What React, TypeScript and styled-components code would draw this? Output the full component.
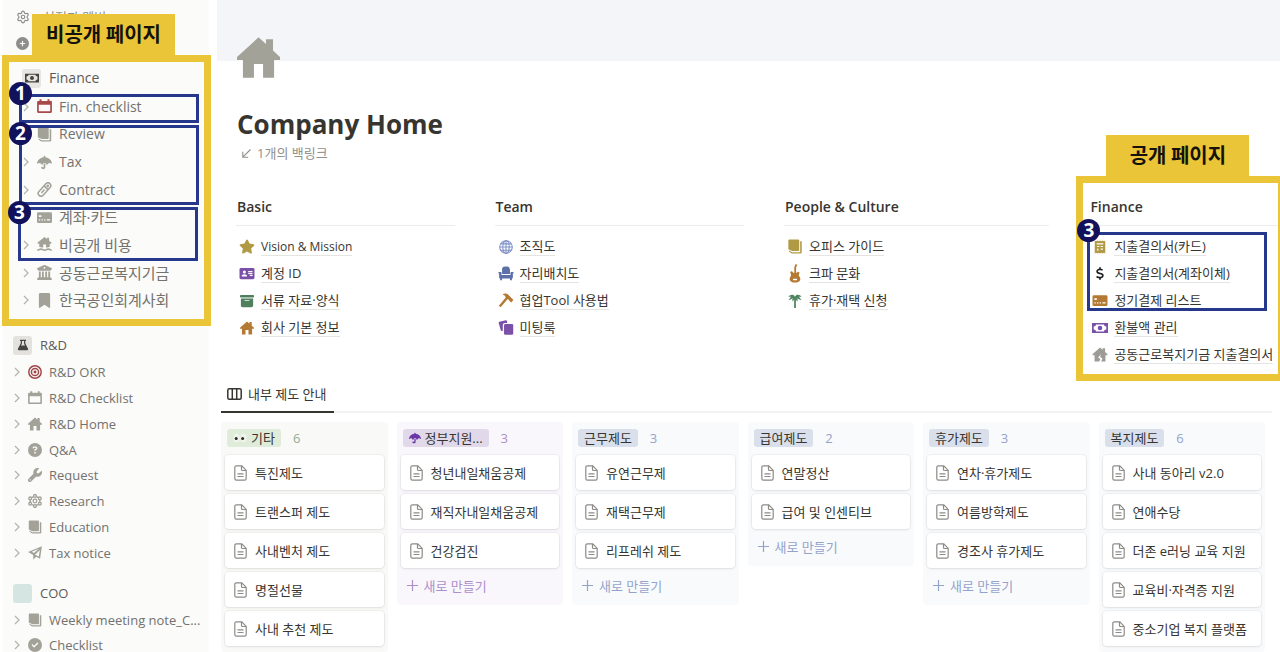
import React from "react";
import styled, { createGlobalStyle } from "styled-components";
import {
  FaBookmark,
  FaBoxArchive,
  FaBuildingColumns,
  FaCircleCheck,
  FaCirclePlus,
  FaCircleQuestion,
  FaDollarSign,
  FaStar,
  FaUmbrella,
  FaWrench,
} from "react-icons/fa6";
import { Settings } from "lucide-react";

const colors = {
  ink: "#373530",
  sidebarText: "#73726e",
  iconGray: "#a3a299",
  yellow: "#ebc538",
  navy: "#12125c",
  frameBlue: "#26388c",
  line: "#ececea",
};

const GlobalStyle = createGlobalStyle`
  *, *::before, *::after { box-sizing: border-box; }
  body {
    margin: 0;
    background: #ffffff;
    color: ${colors.ink};
    font-family: "Open Sans", "Noto Sans CJK KR", sans-serif;
    font-size: 13px;
    line-height: 18px;
  }
  a { color: inherit; text-decoration: none; }
  button { font: inherit; color: inherit; background: none; border: 0; padding: 0; cursor: pointer; }
  ul { list-style: none; margin: 0; padding: 0; }
  h1, h2 { margin: 0; }
  svg { display: block; flex: none; }
`;

/* ---------- icons ---------- */

type IconProps = { size?: number };
const Svg = ({ size = 16, children }: IconProps & { children: React.ReactNode }) => (
  <svg width={size} height={size} viewBox="0 0 16 16" fill="currentColor" aria-hidden="true">
    {children}
  </svg>
);

const HomeIcon = ({ size }: IconProps) => (
  <Svg size={size}>
    <path d="M8 .5 10.8 3V1.200h2.600v4.200L16 7.800v1.100h-2.200v6.600H9.700v-5.100H6.300v5.100H2.200V8.900H0V7.800Z" />
  </Svg>
);
const CrackedHomeIcon = ({ size }: IconProps) => (
  <Svg size={size}>
    <path d="M8 .5 10.8 3V1.200h2.600v4.200L16 7.800v1.100h-2.200v6.600H9.200l1.400-3.300-2.500-1.500.9-3-3 3.500 2.400 1.600-1.200 2.700H2.200V8.900H0V7.800Z" />
  </Svg>
);
const MoneyIcon = ({ size }: IconProps) => (
  <Svg size={size}>
    <path
      fillRule="evenodd"
      d="M0 3h16v10H0ZM4 4.400C4 5.600 3 6.400 1.700 6.400v3.200C3 9.600 4 10.400 4 11.600h8c0-1.200 1-2 2.300-2V6.400C13 6.400 12 5.600 12 4.400Z"
    />
    <circle cx="8" cy="8" r="2.300" />
  </Svg>
);
const CalendarIcon = ({ size }: IconProps) => (
  <Svg size={size}>
    <path
      fillRule="evenodd"
      d="M2.700.3h2.100V2h6.400V.3h2.100V2h1.200A1.200 1.200 0 0 1 15.900 3.200v10.500a1.200 1.200 0 0 1-1.200 1.200H1.300A1.200 1.200 0 0 1 .1 13.700V3.200A1.200 1.200 0 0 1 1.300 2h1.400ZM1.900 6v7.100h12.200V6Z"
    />
  </Svg>
);
const BooksIcon = ({ size }: IconProps) => (
  <Svg size={size}>
    <path d="M2.200.5h9.300a1 1 0 0 1 1 1v10.300a1 1 0 0 1-1 1H5.200L.9 10.900V1.700A1.200 1.200 0 0 1 2.200.5Z" />
    <path d="M13.500 2.500h1.700v11.700a1.300 1.300 0 0 1-1.300 1.300H4.500L1.700 13.200v-1.100l3.200 1.900h8.600Z" />
  </Svg>
);
const TubeIcon = ({ size }: IconProps) => (
  <Svg size={size}>
    <g transform="rotate(42 8 8)" fill="none" stroke="currentColor" strokeWidth="1.600">
      <rect x="5" y="-.5" width="6" height="17" rx="3" />
      <path d="M5 5.500h6" />
      <path d="M8 8v5" />
      <circle cx="8" cy="2.800" r=".7" />
    </g>
  </Svg>
);
const CardIcon = ({ size }: IconProps) => (
  <Svg size={size}>
    <path
      fillRule="evenodd"
      d="M1.500 2.300h13A1.500 1.500 0 0 1 16 3.800v8.600a1.500 1.500 0 0 1-1.500 1.500h-13A1.500 1.500 0 0 1 0 12.400V3.800a1.500 1.500 0 0 1 1.500-1.500ZM2 5.700v1.800h2.600v-1.800ZM2 9.800v1.300h1.400V9.800Zm2.800 0v1.300h1.400V9.800Zm2.800 0v1.300H9V9.800Zm3 0v1.300H14V9.800Z"
    />
  </Svg>
);
const FloodHouseIcon = ({ size }: IconProps) => (
  <Svg size={size}>
    <path d="M8 0l2.700 2.200V.9h2.200V4l2.700 2.200-.6 1H13.600v3.400c-1-.2-1.900.7-2.800.7-.4 0-.8-.2-1.200-.5V8H6.600v2.900c-.8.5-1.700.4-2.500 0l-1.700-.5V7.200H1L.4 6.200Z" />
    <path
      d="M.3 14.200c2 0 2-1.300 3.900-1.300s2 1.300 3.900 1.300 2-1.300 3.900-1.300 1.900 1.300 3.700 1.300"
      fill="none"
      stroke="currentColor"
      strokeWidth="1.700"
    />
  </Svg>
);
const FlaskIcon = ({ size }: IconProps) => (
  <Svg size={size}>
    <path
      fillRule="evenodd"
      d="M4 1h8v1.600h-1v3.200l3.700 7.200c.5 1-.1 2-1.200 2h-11c-1.100 0-1.700-1-1.200-2L5 5.800V2.600H4Zm2.600 1.600v3.600L5.300 8.800h5.400L9.400 6.200V2.600Z"
    />
  </Svg>
);
const TargetIcon = ({ size }: IconProps) => (
  <Svg size={size}>
    <g fill="none" stroke="currentColor" strokeWidth="1.700">
      <circle cx="8" cy="8" r="7.100" />
      <circle cx="8" cy="8" r="4.100" />
    </g>
    <circle cx="8" cy="8" r="1.700" />
  </Svg>
);
const MoleculeIcon = ({ size }: IconProps) => (
  <Svg size={size}>
    <g fill="none" stroke="currentColor" strokeWidth="1.500">
      <circle cx="8" cy="8" r="2.100" />
      <circle cx="8" cy="2.200" r="1.600" />
      <circle cx="8" cy="13.800" r="1.600" />
      <circle cx="2.500" cy="5" r="1.600" />
      <circle cx="2.500" cy="11" r="1.600" />
      <circle cx="13.500" cy="5" r="1.600" />
      <circle cx="13.500" cy="11" r="1.600" />
      <path d="M3.900 4.200l2.700-1.300M9.400 2.900l2.700 1.300M2.500 6.600v2.800M13.500 6.600v2.800M3.900 11.800l2.700 1.300M9.400 13.100l2.700-1.300" />
    </g>
  </Svg>
);
const PlaneIcon = ({ size }: IconProps) => (
  <Svg size={size}>
    <path
      fillRule="evenodd"
      d="M15.900.4 13.800 14.500l-4.600-2.200-3.200 3.500V10.200L0 6.800Zm-3.600 2.700L4.400 6.700l2.400 1.400Zm1.200 1.500L8.100 10l4.200 2Z"
    />
  </Svg>
);
const IdCardIcon = ({ size }: IconProps) => (
  <Svg size={size}>
    <path
      fillRule="evenodd"
      d="M1.500 2h13A1.500 1.500 0 0 1 16 3.500v9a1.500 1.500 0 0 1-1.500 1.500h-13A1.500 1.500 0 0 1 0 12.500v-9A1.500 1.500 0 0 1 1.500 2ZM5.200 4.700a1.600 1.600 0 1 0 0 3.200 1.600 1.600 0 0 0 0-3.200ZM2.300 11.300h5.800c0-1.600-1.100-2.400-2.900-2.400s-2.900.8-2.900 2.400ZM9.300 5.200v1.200h4.600V5.200Zm0 2.100v1.200h4.600V7.300Zm1.600 2.100v1.200h3V9.400Z"
    />
  </Svg>
);
const GlobeIcon = ({ size }: IconProps) => (
  <Svg size={size}>
    <g fill="none" stroke="currentColor" strokeWidth="1.200">
      <circle cx="8" cy="8" r="7.200" />
      <ellipse cx="8" cy="8" rx="3.700" ry="7.200" />
      <path d="M8 .8v14.400M.8 8h14.400M2 4.400h12M2 11.600h12" />
    </g>
  </Svg>
);
const ArmchairIcon = ({ size }: IconProps) => (
  <Svg size={size}>
    <path d="M3.800 3.900A3.300 3.300 0 0 1 7.100.6h1.800a3.300 3.300 0 0 1 3.300 3.300v4.700H3.800Z" />
    <path d="M0 6.300h2.600a.6.600 0 0 1 .6.600v2.700h9.600V6.900a.6.600 0 0 1 .6-.6H16v1.600h-.7v4.300a1 1 0 0 1-1 1v2h-2v-2H3.700v2h-2v-2a1 1 0 0 1-1-1V7.900H0Z" />
  </Svg>
);
const ClawHammerIcon = ({ size }: IconProps) => (
  <Svg size={size}>
    <path d="M4.300 1.700C6.300.2 8.700.1 10.500 1.800l2.600 2.700c.2.700.5 1 1.100 1.100l1.700 1.900-2.400 2.500-2-1.800c0-.8-.3-1.200-1-1.300L9.800 6.400 2.300 15.300.4 13.500 7.700 4.800C7.200 3 6 2.300 4.300 1.700Z" />
  </Svg>
);
const DeckIcon = ({ size }: IconProps) => (
  <Svg size={size}>
    <path d="M7.800.2 1 1.900a1 1 0 0 0-.8 1.200L2.400 11a1 1 0 0 0 1.200.7l1-.2V5.400a2.200 2.200 0 0 1 2.200-2.200h2.600L9 1A1 1 0 0 0 7.800.2Z" />
    <rect x="5.900" y="4.200" width="9.800" height="11.600" rx="1.400" />
  </Svg>
);
const GuitarIcon = () => (
  <svg width="12" height="19" viewBox="0 0 12 19" fill="currentColor" aria-hidden="true">
    <path
      fillRule="evenodd"
      d="M5.300 9V3.300L6.400.3 8.300.6 7.100 3.600V9c.9 0 1.300-.6 1.600-1.200 1.500-.3 2.100.8 1.500 1.900-.8 1.400-.3 2 .5 3.200 1.800 3-.3 5.600-4.700 5.600s-6.500-2.600-4.700-5.600c.8-1.200 1.100-2 .3-3.400-.7-1.300 0-2.600 1.500-2.300C3.800 8.100 4.400 9 5.300 9ZM4 14.800v1.400h4v-1.400Z"
    />
  </svg>
);
const PalmIcon = ({ size }: IconProps) => (
  <Svg size={size}>
    <path d="M8 3.100C9.500 0 13.500.3 15.600 3.200L12.500 3l3 3.800c-2.200-.1-3.900-.9-5-2.200.8 1.400.7 2.700.1 4L9 6.300V16H7V6.300L5.400 8.600c-.6-1.300-.7-2.600.1-4-1.100 1.300-2.800 2.100-5 2.200l3-3.800-3.100.2C2.500.3 6.500 0 8 3.100Z" />
  </Svg>
);
const ReceiptIcon = ({ size }: IconProps) => (
  <Svg size={size}>
    <path
      fillRule="evenodd"
      d="M2 .5l1.500.8L5 .5l1.500.8L8 .5l1.500.8L11 .5l1.500.8L14 .5v15l-1.500-.8-1.500.8-1.500-.8-1.500.8-1.500-.8-1.500.8-1.500-.8-1.500.8ZM4.200 3.800V5h7.600V3.800Zm.6 3v1.300h2.500V6.800Zm4 0v1.300h2.500V6.800Zm-4 3v2.500h1.300V9.800Zm4 0v1.300h2.500V9.800Z"
    />
  </Svg>
);
const ChevronIcon = () => (
  <svg width="8" height="10" viewBox="0 0 8 10" fill="none" stroke="#b5b4af" strokeWidth="1.300" aria-hidden="true">
    <path d="M2 1l4 4-4 4" />
  </svg>
);
const PageIcon = () => (
  <svg width="13" height="16" viewBox="0 0 13 16" fill="none" stroke="#8c8b87" strokeWidth="1.200" aria-hidden="true">
    <path d="M2.400.8h5.400l4.400 4.600v8.200a1.600 1.600 0 0 1-1.600 1.600H2.400A1.600 1.600 0 0 1 .8 13.600V2.400A1.600 1.600 0 0 1 2.400.8Z" />
    <path d="M7.500 1v3.500a1 1 0 0 0 1 1h3.500M3.500 8.800h6M3.500 11.500h6" />
  </svg>
);
const PlusIcon = () => (
  <svg width="11" height="11" viewBox="0 0 11 11" stroke="currentColor" strokeWidth="1.200" aria-hidden="true">
    <path d="M5.500 0v11M0 5.500h11" />
  </svg>
);
const BoardIcon = () => (
  <svg width="15" height="12" viewBox="0 0 15 12" fill="none" stroke="#373530" strokeWidth="1.500" aria-hidden="true">
    <rect x=".8" y=".8" width="13.400" height="10.400" rx="1.500" />
    <path d="M5.300 1v10M9.700 1v10" />
  </svg>
);
const BacklinkIcon = () => (
  <svg width="9" height="9" viewBox="0 0 9 9" fill="none" stroke="currentColor" strokeWidth="1.100" aria-hidden="true">
    <path d="M8.500.5.800 8.200M.8 2.800v5.400h5.400" />
  </svg>
);
const EyesIcon = () => (
  <svg width="14" height="12" viewBox="0 0 14 12" aria-hidden="true">
    <ellipse cx="3.500" cy="6" rx="3.200" ry="4.500" fill="#eef3eb" />
    <ellipse cx="10.500" cy="6" rx="3.200" ry="4.500" fill="#eef3eb" />
    <circle cx="3.200" cy="6.500" r="1.500" fill="#2b2b2b" />
    <circle cx="9.600" cy="6.500" r="1.500" fill="#2b2b2b" />
  </svg>
);

/* ---------- annotations drawn over the page ---------- */

type Box = { $top: number; $left: number; $right: number; $bottom: number };

const Frame = styled.div<Box>`
  position: absolute;
  top: ${(p) => p.$top}px;
  left: ${(p) => p.$left}px;
  right: ${(p) => p.$right}px;
  bottom: ${(p) => p.$bottom}px;
  border: 7px solid ${colors.yellow};
  pointer-events: none;
`;
const FrameLabel = styled.div`
  position: absolute;
  bottom: calc(100% + 7px);
  left: 23px;
  width: 143px;
  height: 41px;
  background: ${colors.yellow};
  color: #14120a;
  font: 700 20px/40px "Noto Sans CJK KR", sans-serif;
  text-align: center;
  white-space: nowrap;
`;
const Highlight = styled.div<{ $top: number; $left: number; $height: number }>`
  position: absolute;
  top: ${(p) => p.$top}px;
  left: ${(p) => p.$left}px;
  width: 180px;
  height: ${(p) => p.$height}px;
  border: 3px solid ${colors.frameBlue};
  pointer-events: none;
`;
const Badge = styled.span<{ $top: number }>`
  position: absolute;
  top: ${(p) => p.$top}px;
  left: -13px;
  width: 23px;
  height: 23px;
  border-radius: 50%;
  background: ${colors.navy};
  color: #ffffff;
  font: 700 19px/23px "Open Sans", sans-serif;
  text-align: center;
`;

/* ---------- shell ---------- */

const Shell = styled.div`
  display: flex;
  height: 100vh;
  overflow: hidden;
`;

/* ---------- sidebar ---------- */

const Sidebar = styled.nav`
  flex: none;
  width: 206px;
  margin: 0 8px 0 3px;
  background: #fbfbfa;
  color: ${colors.sidebarText};
`;
const Utility = styled.a`
  display: flex;
  align-items: center;
  gap: 13px;
  height: 26px;
  padding-left: 13px;
  color: #8e8d89;
`;
const UtilityList = styled.div`
  padding-top: 4px;
`;
const Section = styled.section<{ $indent: number; $top: number }>`
  position: relative;
  padding-top: ${(p) => p.$top}px;
  padding-left: ${(p) => p.$indent}px;
`;
const SectionTitle = styled.h2<{ $large?: boolean }>`
  display: flex;
  align-items: center;
  gap: 8px;
  height: 20px;
  font-size: ${(p) => (p.$large ? 14 : 13)}px;
  font-weight: 400;
  color: #5b5a56;
`;
const Tile = styled.span<{ $bg: string }>`
  display: grid;
  place-items: center;
  width: 19px;
  height: 19px;
  border-radius: 3px;
  background: ${(p) => p.$bg};
  color: #45443f;
`;
const Tree = styled.ul<{ $height: number; $top: number }>`
  display: flex;
  flex-direction: column;
  height: ${(p) => p.$height}px;
  margin-top: ${(p) => p.$top}px;
`;
const TreeItem = styled.li`
  display: flex;
  flex: 1;
`;
const TreeLink = styled.a<{ $color?: string; $size: number }>`
  display: flex;
  flex: 1;
  align-items: center;
  min-width: 0;
  font-size: ${(p) => p.$size}px;
  white-space: nowrap;
  > svg:nth-of-type(2) {
    margin: 0 7px;
    color: ${(p) => p.$color || colors.iconGray};
  }
`;

type Entry = { label: string; icon: React.ReactNode; color?: string; size?: number };

const financeTree: Entry[] = [
  { label: "Fin. checklist", icon: <CalendarIcon size={15} />, color: "#a84a48", size: 14 },
  { label: "Review", icon: <BooksIcon size={15} />, size: 14 },
  { label: "Tax", icon: <FaUmbrella size={15} />, size: 14 },
  { label: "Contract", icon: <TubeIcon size={15} />, size: 14 },
  { label: "계좌·카드", icon: <CardIcon size={15} />, size: 15 },
  { label: "비공개 비용", icon: <FloodHouseIcon size={15} />, size: 15 },
  { label: "공동근로복지기금", icon: <FaBuildingColumns size={15} />, size: 15 },
  { label: "한국공인회계사회", icon: <FaBookmark size={15} />, size: 15 },
];
const rdTree: Entry[] = [
  { label: "R&D OKR", icon: <TargetIcon size={14} />, color: "#a04848" },
  { label: "R&D Checklist", icon: <CalendarIcon size={14} /> },
  { label: "R&D Home", icon: <HomeIcon size={14} /> },
  { label: "Q&A", icon: <FaCircleQuestion size={14} /> },
  { label: "Request", icon: <FaWrench size={14} /> },
  { label: "Research", icon: <MoleculeIcon size={14} /> },
  { label: "Education", icon: <BooksIcon size={14} /> },
  { label: "Tax notice", icon: <PlaneIcon size={14} /> },
];
const cooTree: Entry[] = [
  { label: "Weekly meeting note_C...", icon: <BooksIcon size={14} /> },
  { label: "Checklist", icon: <FaCircleCheck size={14} /> },
];

const TreeList = ({ items, height, top = 4 }: { items: Entry[]; height: number; top?: number }) => (
  <Tree $height={height} $top={top}>
    {items.map((item) => (
      <TreeItem key={item.label}>
        <TreeLink href="#" $color={item.color} $size={item.size || 13}>
          <ChevronIcon />
          {item.icon}
          {item.label}
        </TreeLink>
      </TreeItem>
    ))}
  </Tree>
);

/* ---------- main ---------- */

const Main = styled.main`
  display: flex;
  flex: 1;
  flex-direction: column;
  min-width: 0;
  overflow: hidden;
`;
const Cover = styled.div`
  flex: none;
  height: 61px;
  background: #f3f5f9;
`;
const PageHeader = styled.header`
  padding-left: 20px;
`;
const PageIconWrap = styled.div`
  position: relative;
  width: 43px;
  height: 43px;
  margin-top: -25px;
  color: ${colors.iconGray};
`;
const Title = styled.h1`
  margin-top: 27px;
  font-size: 26px;
  line-height: 36px;
  font-weight: 700;
`;
const Backlink = styled.a`
  display: flex;
  align-items: center;
  gap: 6px;
  width: max-content;
  margin: 2px 0 0 5px;
  color: #91908c;
`;
const Directory = styled.div`
  display: grid;
  grid-template-columns: 219fr 250fr 266fr 191fr;
  gap: 40px;
  margin-top: 35px;
  padding-left: 19px;
`;
const DirectoryColumn = styled.section`
  position: relative;
  height: 171px;
`;
const DirectoryTitle = styled.h2`
  height: 29px;
  padding-left: 1px;
  border-bottom: 1px solid ${colors.line};
  font-size: 14px;
  line-height: 20px;
  font-weight: 600;
`;
const LinkList = styled.ul`
  display: grid;
  grid-auto-rows: 27px;
  margin-top: 7px;
  padding-left: 3px;
`;
const LinkRow = styled.li<{ $color: string }>`
  display: flex;
  align-items: center;
  > svg {
    width: 16px;
    margin-right: 6px;
    color: ${(p) => p.$color};
  }
`;
const PageLink = styled.a<{ $latin?: boolean }>`
  border-bottom: 1px solid #e4e4e1;
  font-size: ${(p) => (p.$latin ? 12 : 13)}px;
  font-weight: ${(p) => (p.$latin ? 500 : 400)};
  white-space: nowrap;
  line-height: 17px;
`;

type LinkEntry = { label: string; icon: React.ReactNode; color: string; latin?: boolean };
const directory: { title: string; links: LinkEntry[] }[] = [
  {
    title: "Basic",
    links: [
      { label: "Vision & Mission", icon: <FaStar size={15} />, color: "#b19a45", latin: true },
      { label: "계정 ID", icon: <IdCardIcon size={15} />, color: "#7b50a8" },
      { label: "서류 자료·양식", icon: <FaBoxArchive size={14} />, color: "#4f7f5c" },
      { label: "회사 기본 정보", icon: <HomeIcon size={14} />, color: "#b47a33" },
    ],
  },
  {
    title: "Team",
    links: [
      { label: "조직도", icon: <GlobeIcon size={14} />, color: "#7f90c8" },
      { label: "자리배치도", icon: <ArmchairIcon size={15} />, color: "#5b6fa8" },
      { label: "협업Tool 사용법", icon: <ClawHammerIcon size={15} />, color: "#b47a33" },
      { label: "미팅룩", icon: <DeckIcon size={15} />, color: "#7b50a8" },
    ],
  },
  {
    title: "People & Culture",
    links: [
      { label: "오피스 가이드", icon: <BooksIcon size={15} />, color: "#b19a45" },
      { label: "크파 문화", icon: <GuitarIcon />, color: "#b47a33" },
      { label: "휴가·재택 신청", icon: <PalmIcon size={14} />, color: "#4f8560" },
    ],
  },
  {
    title: "Finance",
    links: [
      { label: "지출결의서(카드)", icon: <ReceiptIcon size={14} />, color: "#b19a45" },
      { label: "지출결의서(계좌이체)", icon: <FaDollarSign size={13} />, color: "#1c1c1c" },
      { label: "정기결제 리스트", icon: <CardIcon size={15} />, color: "#b47a33" },
      { label: "환불액 관리", icon: <MoneyIcon size={16} />, color: "#7b50a8" },
      { label: "공동근로복지기금 지출결의서", icon: <CrackedHomeIcon size={15} />, color: "#9c9b96" },
    ],
  },
];

const Tabs = styled.div`
  display: flex;
  margin: 11px 8px 0 4px;
  box-shadow: inset 0 -2px 0 #f2f2f0;
`;
const Tab = styled.button`
  display: flex;
  align-items: center;
  gap: 6px;
  height: 34px;
  padding: 0 7px 2px 6px;
  border-bottom: 2px solid ${colors.ink};
`;
const Board = styled.div`
  display: grid;
  flex: 1;
  grid-template-columns: repeat(6, minmax(0, 1fr));
  gap: 9px;
  align-items: start;
  margin: 9px 15px 0 4px;
`;
const Column = styled.section<{ $bg: string; $open?: boolean }>`
  align-self: ${(p) => (p.$open ? "stretch" : "start")};
  padding: 7px 4px 5px;
  border-radius: 4px;
  background: ${(p) => p.$bg};
`;
const ColumnHead = styled.header`
  display: flex;
  align-items: center;
  gap: 12px;
  margin: 0 2px 8px;
`;
const Tag = styled.h2<{ $bg: string }>`
  display: flex;
  align-items: center;
  gap: 4px;
  height: 18px;
  padding: 0 6px;
  border-radius: 3px;
  background: ${(p) => p.$bg};
  font-size: 13px;
  font-weight: 400;
  white-space: nowrap;
`;
const Count = styled.span<{ $color: string }>`
  color: ${(p) => p.$color};
`;
const Cards = styled.ul`
  display: grid;
  gap: 4px;
`;
const Card = styled.a`
  display: flex;
  align-items: center;
  gap: 8px;
  height: 35px;
  padding: 0 9px;
  border-radius: 4px;
  background: #ffffff;
  box-shadow: 0 0 0 1px rgba(15, 15, 15, 0.04), 0 1px 3px rgba(15, 15, 15, 0.08);
  white-space: nowrap;
`;
const NewButton = styled.button<{ $color: string }>`
  display: flex;
  align-items: center;
  gap: 6px;
  height: 32px;
  padding: 3px 6px 0;
  color: ${(p) => p.$color};
`;

type ColumnData = {
  tag: string;
  emoji?: React.ReactNode;
  count: number;
  bg: string;
  tagBg: string;
  accent: string;
  cards: string[];
  open?: boolean;
};
const blue = { bg: "#f8fafc", tagBg: "#dae0eb", accent: "#94a3cb" };
const columns: ColumnData[] = [
  {
    tag: "기타",
    emoji: <EyesIcon />,
    count: 6,
    bg: "#f9f9f7",
    tagBg: "#e0ecda",
    accent: "#93ac95",
    cards: ["특진제도", "트랜스퍼 제도", "사내벤처 제도", "명절선물", "사내 추천 제도"],
    open: true,
  },
  {
    tag: "정부지원...",
    emoji: <FaUmbrella size={12} color="#6a35a8" />,
    count: 3,
    bg: "#f9f7fc",
    tagBg: "#e1d9ea",
    accent: "#ab8fcb",
    cards: ["청년내일채움공제", "재직자내일채움공제", "건강검진"],
  },
  { tag: "근무제도", count: 3, ...blue, cards: ["유연근무제", "재택근무제", "리프레쉬 제도"] },
  { tag: "급여제도", count: 2, ...blue, cards: ["연말정산", "급여 및 인센티브"] },
  { tag: "휴가제도", count: 3, ...blue, cards: ["연차·휴가제도", "여름방학제도", "경조사 휴가제도"] },
  {
    tag: "복지제도",
    count: 6,
    ...blue,
    cards: ["사내 동아리 v2.0", "연애수당", "더존 e러닝 교육 지원", "교육비·자격증 지원", "중소기업 복지 플랫폼"],
    open: true,
  },
];

export default function App() {
  return (
    <Shell>
      <GlobalStyle />
      <Sidebar>
        <UtilityList>
          <Utility href="#">
            <Settings size={14} strokeWidth={2} />
            설정과 멤버
          </Utility>
          <Utility href="#" aria-label="New page">
            <FaCirclePlus size={13} />
          </Utility>
        </UtilityList>

        <Section $indent={19} $top={12}>
          <SectionTitle $large>
            <Tile $bg="#e6e5e2">
              <MoneyIcon size={14} />
            </Tile>
            Finance
          </SectionTitle>
          <TreeList items={financeTree} height={221} top={5} />
          <Frame $top={-1} $left={-1} $right={-2} $bottom={-12}>
            <FrameLabel>비공개 페이지</FrameLabel>
          </Frame>
          <Highlight $top={38} $left={16} $height={29}>
            <Badge $top={-15}>1</Badge>
          </Highlight>
          <Highlight $top={69} $left={16} $height={80}>
            <Badge $top={-6}>2</Badge>
          </Highlight>
          <Highlight $top={151} $left={15} $height={54}>
            <Badge $top={-9}>3</Badge>
          </Highlight>
        </Section>

        <Section $indent={10} $top={21}>
          <SectionTitle>
            <Tile $bg="#e3e2df">
              <FlaskIcon size={12} />
            </Tile>
            R&amp;D
          </SectionTitle>
          <TreeList items={rdTree} height={207} />
        </Section>

        <Section $indent={10} $top={17}>
          <SectionTitle>
            <Tile $bg="#d5e6e2" />
            COO
          </SectionTitle>
          <TreeList items={cooTree} height={50} />
        </Section>
      </Sidebar>

      <Main>
        <Cover />
        <PageHeader>
          <PageIconWrap>
            <HomeIcon size={43} />
          </PageIconWrap>
          <Title>Company Home</Title>
          <Backlink href="#">
            <BacklinkIcon />
            1개의 백링크
          </Backlink>
        </PageHeader>

        <Directory>
          {directory.map((column) => (
            <DirectoryColumn key={column.title}>
              <DirectoryTitle>{column.title}</DirectoryTitle>
              <LinkList>
                {column.links.map((link) => (
                  <LinkRow key={link.label} $color={link.color}>
                    {link.icon}
                    <PageLink href="#" $latin={link.latin}>
                      {link.label}
                    </PageLink>
                  </LinkRow>
                ))}
              </LinkList>
              {column.title === "Finance" && (
                <>
                  <Frame $top={-21} $left={-13} $right={-5} $bottom={-13}>
                    <FrameLabel>공개 페이지</FrameLabel>
                  </Frame>
                  <Highlight $top={35} $left={-2} $height={79}>
                    <Badge $top={-16}>3</Badge>
                  </Highlight>
                </>
              )}
            </DirectoryColumn>
          ))}
        </Directory>

        <Tabs>
          <Tab>
            <BoardIcon />
            내부 제도 안내
          </Tab>
        </Tabs>

        <Board>
          {columns.map((column) => (
            <Column key={column.tag} $bg={column.bg} $open={column.open}>
              <ColumnHead>
                <Tag $bg={column.tagBg}>
                  {column.emoji}
                  {column.tag}
                </Tag>
                <Count $color={column.accent}>{column.count}</Count>
              </ColumnHead>
              <Cards>
                {column.cards.map((card) => (
                  <li key={card}>
                    <Card href="#">
                      <PageIcon />
                      {card}
                    </Card>
                  </li>
                ))}
              </Cards>
              {!column.open && (
                <NewButton $color={column.accent}>
                  <PlusIcon />
                  새로 만들기
                </NewButton>
              )}
            </Column>
          ))}
        </Board>
      </Main>
    </Shell>
  );
}
